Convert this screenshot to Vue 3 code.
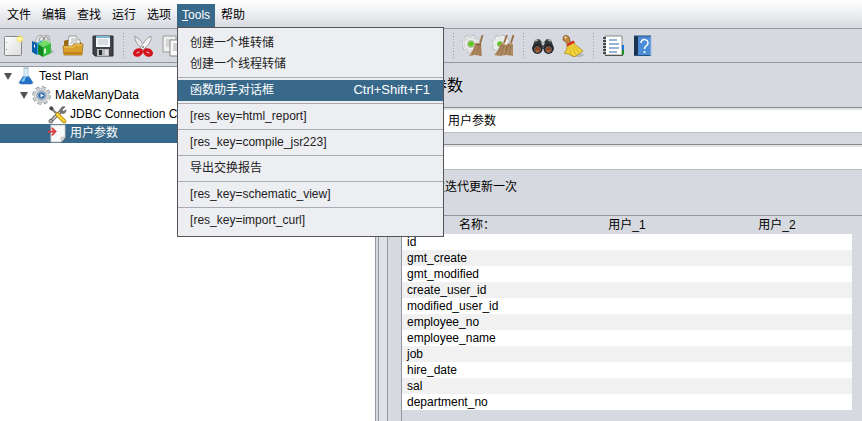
<script setup>
import { ref } from 'vue'

const menus = ['文件', '编辑', '查找', '运行', '选项', 'Tools', '帮助']

const popupGroups = [
  [{ label: '创建一个堆转储' }, { label: '创建一个线程转储' }],
  [{ label: '函数助手对话框', shortcut: 'Ctrl+Shift+F1', active: true }],
  [{ label: '[res_key=html_report]' }],
  [{ label: '[res_key=compile_jsr223]' }],
  [{ label: '导出交换报告' }],
  [{ label: '[res_key=schematic_view]' }],
  [{ label: '[res_key=import_curl]' }]
]

const columns = ['名称：', '用户_1', '用户_2']
const rows = [
  'id', 'gmt_create', 'gmt_modified', 'create_user_id', 'modified_user_id',
  'employee_no', 'employee_name', 'job', 'hire_date', 'sal', 'department_no'
]

const name = ref('用户参数')
const comment = ref('')
const once = ref(false)
</script>

<template>
  <div class="app">
    <nav class="menubar">
      <div v-for="m in menus" :key="m" class="menu">
        <button type="button" class="menu-button" :class="{ open: m === 'Tools' }">
          <template v-if="m === 'Tools'"><u>T</u>ools</template>
          <template v-else>{{ m }}</template>
        </button>
        <div v-if="m === 'Tools'" class="popup">
          <div v-for="(group, i) in popupGroups" :key="i" class="group">
            <button v-for="item in group" :key="item.label" type="button" class="item" :class="{ active: item.active }">
              <span>{{ item.label }}</span>
              <span v-if="item.shortcut" class="shortcut">{{ item.shortcut }}</span>
            </button>
          </div>
        </div>
      </div>
    </nav>

    <div class="toolbar">
      <button type="button" class="tool first" aria-label="新建">
        <svg viewBox="0 0 22 22">
          <defs>
            <linearGradient id="paper" x1="0" y1="0" x2="1" y2="1"><stop offset="0" stop-color="#fff" /><stop offset="1" stop-color="#dcdcdc" /></linearGradient>
            <radialGradient id="glow"><stop offset="0" stop-color="#fff" /><stop offset=".4" stop-color="#fff27a" /><stop offset="1" stop-color="#f5e04a" stop-opacity=".1" /></radialGradient>
          </defs>
          <rect x="2.500" y="1.500" width="17" height="19" rx="1" fill="url(#paper)" stroke="#85858a" />
          <path d="M4.500 7v1M4.500 14v1" stroke="#999" />
          <circle cx="18" cy="4" r="4" fill="url(#glow)" />
        </svg>
      </button>
      <button type="button" class="tool" aria-label="模板">
        <svg viewBox="0 0 22 22">
          <path d="M3 6l3-5 5-1 6 1 1 6-6 5z" fill="#e8e8e8" stroke="#999" stroke-width=".8" />
          <path d="M7 6c0-5 5-6 6-1M11 6c0-6 6-5 5 0" fill="none" stroke="#888" />
          <path d="M0 6l5 2v12l-5-3z" fill="#0a5fa8" /><path d="M5 8l5-3v13l-5 2z" fill="#3ba7e5" />
          <path d="M16 20l6-3-4-4z" fill="#777" opacity=".4" />
          <path d="M6 9l5 3v10l-5-3z" fill="#138423" /><path d="M11 12l8-4v10l-8 4z" fill="#2fbc39" />
          <path d="M6 9l7-4 6 3-8 4z" fill="#74da63" /><path d="M12 14l2-1v5l-2 1z" fill="#dbf8cf" />
          <path d="M2 9l1 1v3l-1-1z" fill="#fff" />
        </svg>
      </button>
      <button type="button" class="tool" aria-label="打开">
        <svg viewBox="0 0 22 22">
          <path d="M2 10V6l2-1h5l2 2h8l1 3v9H2z" fill="#9b6815" />
          <path d="M6 11l1-10h7l4 4v8z" fill="#fafafa" stroke="#888" stroke-width=".8" /><path d="M14 1v4h4" fill="#ddd" stroke="#999" stroke-width=".6" />
          <path d="M9 4h4M9 6h6M8 8h8" stroke="#aaa" />
          <path d="M1 11h9l2-2h9l-1 11H2z" fill="#d9a02d" stroke="#a87314" stroke-width=".8" />
          <path d="M2 12h9l2-2h7" fill="none" stroke="#f6d475" /><path d="M3 18h17" stroke="#c08420" stroke-width="2" />
        </svg>
      </button>
      <button type="button" class="tool" aria-label="保存">
        <svg viewBox="0 0 22 22">
          <path d="M1 1h20v20H3l-2-2z" fill="#404248" stroke="#282a2e" />
          <path d="M4 1h14v11H4z" fill="#f5f8fa" /><path d="M4 1h14v2H4z" fill="#7fb9d1" />
          <path d="M6 5h10M6 7h10M6 9h10" stroke="#b9c3c8" />
          <path d="M5 14h12v7H5z" fill="#b8babd" /><path d="M7 15h3v5H7z" fill="#25272a" /><path d="M13 15h3v5h-3z" fill="#ddd" />
        </svg>
      </button>
      <i class="divider"></i>
      <button type="button" class="tool" aria-label="剪切">
        <svg viewBox="0 0 22 22">
          <path d="M3 1c-1 5 3 9 8 14l3-2C11 8 8 4 3 1z" fill="#e6e6e6" stroke="#8a8a8a" stroke-width=".8" />
          <path d="M19 1c1 5-3 9-8 14l-3-2C11 8 14 4 19 1z" fill="#f6f6f6" stroke="#8a8a8a" stroke-width=".8" />
          <circle cx="11" cy="12" r="1" fill="#777" />
          <ellipse cx="6" cy="17.500" rx="3.500" ry="2.300" transform="rotate(-25 6 17.500)" fill="none" stroke="#d5121c" stroke-width="3.400" />
          <ellipse cx="16" cy="17.500" rx="3.500" ry="2.300" transform="rotate(25 16 17.500)" fill="none" stroke="#d5121c" stroke-width="3.400" />
        </svg>
      </button>
      <button type="button" class="tool" aria-label="复制">
        <svg viewBox="0 0 22 22">
          <path d="M1 1h13v16H1z" fill="#f0f0f0" stroke="#999" /><path d="M4 5h7M4 7h7M4 9h7M4 11h7" stroke="#bbb" />
          <path d="M8 5h13v16H8z" fill="#fafafa" stroke="#888" /><path d="M11 9h7M11 11h7M11 13h7M11 15h7" stroke="#aaa" />
        </svg>
      </button>
      <span class="covered"></span>
      <i class="divider"></i>
      <button type="button" class="tool" aria-label="清除">
        <svg viewBox="0 0 22 22">
          <circle cx="9" cy="9" r="7.500" fill="none" stroke="#a9aba9" stroke-width="3.600" stroke-dasharray="3.500 2.390" />
          <circle cx="9" cy="9" r="7.300" fill="none" stroke="#f1f1f1" stroke-width="2.600" stroke-dasharray="3.300 2.434" />
          <circle cx="9" cy="9" r="6.700" fill="#ebebeb" stroke="#bbb" stroke-width=".5" /><circle cx="9" cy="9" r="3.600" fill="#d4ebbf" stroke="#999" stroke-width=".6" /><circle cx="9" cy="9" r="2.800" fill="#5fc424" />
          <path d="M20.500 0l-2.500 9" stroke="#986d43" stroke-width="1.800" />
          <path d="M13 8l6 1 1 12-7-1-6 1c3-4 5-8 6-13z" fill="#b08b62" /><path d="M15 10l-5 10M17 10l-3 10M18 10v11" stroke="#8a6643" stroke-width=".8" /><path d="M14 9l5 1" stroke="#7c4d29" />
        </svg>
      </button>
      <button type="button" class="tool" aria-label="清除全部">
        <svg viewBox="0 0 22 22">
          <circle cx="9" cy="9" r="7.500" fill="none" stroke="#a9aba9" stroke-width="3.600" stroke-dasharray="3.500 2.390" />
          <circle cx="9" cy="9" r="7.300" fill="none" stroke="#f1f1f1" stroke-width="2.600" stroke-dasharray="3.300 2.434" />
          <circle cx="9" cy="9" r="6.700" fill="#ebebeb" /><circle cx="8" cy="9" r="2.800" fill="#5fc424" />
          <path d="M15 0l-3 8M21.500 0l-2.500 8" stroke="#986d43" stroke-width="1.800" />
          <path d="M8 9l3-1 3 2 3-2 4 1v12l-7-1-6 1-6-1c3-3 5-6 6-11z" fill="#b08b62" /><path d="M10 10L5 20M12 10l-3 10M17 9l-4 11M19 10l-2 10M14 11v5" stroke="#8a6643" stroke-width=".8" />
        </svg>
      </button>
      <i class="divider"></i>
      <button type="button" class="tool" aria-label="查找">
        <svg viewBox="0 0 22 22">
          <path d="M3 5l4-1 3 3v8l-9 1-1-3zM19 5l-4-1-3 3v8l9 1 1-3z" fill="#34373a" />
          <path d="M3 6l3-1M16 5l3 1M9 8h4" stroke="#a5a8ab" stroke-width="1.500" /><path d="M9 10h4v4H9z" fill="#555" />
          <circle cx="5.500" cy="14" r="5" fill="#222527" /><circle cx="16.500" cy="14" r="5" fill="#222527" />
          <circle cx="5.500" cy="14.500" r="3" fill="#8a421d" stroke="#666" /><circle cx="16.500" cy="14.500" r="3" fill="#8a421d" stroke="#666" />
          <path d="M4 15.500c1 1 2 1 3 0M15 15.500c1 1 2 1 3 0" stroke="#e58137" fill="none" />
        </svg>
      </button>
      <button type="button" class="tool" aria-label="重置查找">
        <svg viewBox="0 0 22 22">
          <ellipse cx="15" cy="20" rx="7" ry="2" fill="#888" opacity=".4" />
          <path d="M1.500 1.500L4 0l3 2 1 4 2 2-4 3-2-4-3-2z" fill="#c28b3e" stroke="#76501c" stroke-width=".8" /><circle cx="3.500" cy="2.500" r=".9" fill="#fff" />
          <path d="M5 10l7-3c1 4 5 5 9 9l-9 6c-1-2-3-1-4-2 1-1-3-1-6-2 3-2 3-4 3-8z" fill="#f2d43c" stroke="#a8850f" stroke-width=".8" />
          <path d="M4.500 9.500l7-4 1.500 2-7.500 4z" fill="#d52e24" /><path d="M7 12l2 7M9 11l5 8M11 10l6 7" stroke="#c5a51f" stroke-width=".7" />
        </svg>
      </button>
      <i class="divider"></i>
      <button type="button" class="tool" aria-label="函数助手">
        <svg viewBox="0 0 22 22">
          <path d="M3 1h17v19H3z" fill="#fff" stroke="#888" /><path d="M20 10h2v5h-2z" fill="#1877db" /><path d="M20 15h2v4l-2 2z" fill="#188d21" /><path d="M3 20.500h18" stroke="#555" />
          <path d="M7 5h8M7 9h10M7 13h10M7 17h8" stroke="#3468aa" stroke-width="1.200" />
          <path d="M1 3h3M1 6h3M1 9h3M1 12h3M1 15h3M1 18h3" stroke="#222" stroke-width="1.400" />
        </svg>
      </button>
      <button type="button" class="tool" aria-label="帮助">
        <svg viewBox="0 0 22 22">
          <path d="M2 1h17v20H2z" fill="#4a8cd6" /><path d="M2 1h4v20H2z" fill="#1b3350" /><path d="M2 1h17M2 20.500h17" stroke="#284f7d" />
          <path d="M19 2v19" stroke="#9dbde4" />
          <path d="M9 8c0-5 7-4 7 0 0 3-3.500 2.500-3.500 6" fill="none" stroke="#fff" stroke-width="1.500" /><circle cx="12.500" cy="17" r="1.100" fill="#fff" />
        </svg>
      </button>
    </div>

    <main class="workspace">
      <section class="tree">
        <div class="node">
          <span class="arrow"></span>
          <svg class="flask" viewBox="0 0 16 18">
            <ellipse cx="8" cy="16" rx="8" ry="1.800" fill="#888" opacity=".35" />
            <path d="M6 1h4v7l4.500 7-1 2h-11l-1-2L6 8z" fill="#dceefa" stroke="#a5bccf" stroke-width=".8" />
            <path d="M5 9.500h6l4 6-1.500 1.500h-11L1 15.500z" fill="#2470c4" /><path d="M3 14l3-4h2l-2 5z" fill="#7cc2f1" /><path d="M5 1h6" stroke="#aac3d6" />
          </svg>
          <span>Test Plan</span>
        </div>
        <div class="node level-1">
          <span class="arrow"></span>
          <svg class="gear" viewBox="0 0 20 20">
            <circle cx="10" cy="10" r="8" fill="none" stroke="#8d9196" stroke-width="3.600" stroke-dasharray="3.900 2.383" />
            <circle cx="10" cy="10" r="7.900" fill="none" stroke="#d6d8da" stroke-width="2.200" stroke-dasharray="3.200 3.005" stroke-dashoffset="-.3" />
            <circle cx="10" cy="10" r="7.300" fill="#dcdee0" stroke="#a0a4a8" stroke-width=".6" /><circle cx="10" cy="10" r="4.800" fill="#c4d8ea" stroke="#7d8790" stroke-width=".9" />
            <circle cx="10" cy="10" r="3.500" fill="#3a6ea9" /><path d="M9 8l3.500 2L9 12z" fill="#eaf5ff" />
          </svg>
          <span>MakeManyData</span>
        </div>
        <div class="node level-2">
          <svg class="leaf" viewBox="0 0 20 20">
            <path d="M2 2l8 8" stroke="#888" stroke-width="2.500" /><path d="M1 4l3-3 2 3-2 2z" fill="#444" />
            <path d="M3 17L14 6" stroke="#555" stroke-width="3.500" /><path d="M3 17L14 6" stroke="#ddd" stroke-width="1.500" />
            <path d="M13 8c-1-5 2-7 5-6l-3 3 1 2 3-2c0 4-3 5-6 3z" fill="#777" stroke="#555" stroke-width=".6" />
            <path d="M10 10l7 7" stroke="#b68a0a" stroke-width="4.500" stroke-linecap="round" /><path d="M10 10l7 7" stroke="#ffd43a" stroke-width="2.800" stroke-linecap="round" />
            <circle cx="3" cy="17" r="2" fill="#aaa" stroke="#555" stroke-width=".8" />
          </svg>
          <span>JDBC Connection Configuration</span>
        </div>
        <div class="node level-2 selected">
          <svg class="leaf" viewBox="0 0 20 20">
            <path d="M3 1h15v13l-4 5H3z" fill="#f8f8f8" stroke="#b8b8b8" stroke-width=".8" /><path d="M18 14h-4v5" fill="#ddd" stroke="#aaa" stroke-width=".7" />
            <path d="M0 8h7" stroke="#d93a3d" stroke-width="2.200" /><path d="M4 4l4 4-4 4" fill="none" stroke="#d93a3d" stroke-width="1.800" />
          </svg>
          <span>用户参数</span>
        </div>
      </section>
      <div class="splitter"></div>
      <section class="editor">
        <h1>用户参数</h1>
        <div class="field"><label for="name">名称：</label><input id="name" v-model="name" type="text" /></div>
        <div class="field"><label for="comment">注释：</label><input id="comment" v-model="comment" type="text" /></div>
        <label class="check"><input v-model="once" type="checkbox" />每次迭代更新一次</label>
        <div class="params">
          <table>
            <thead><tr><th v-for="c in columns" :key="c" scope="col">{{ c }}</th></tr></thead>
            <tbody><tr v-for="r in rows" :key="r"><td>{{ r }}</td><td></td><td></td></tr></tbody>
          </table>
        </div>
      </section>
    </main>
  </div>
</template>

<style>
html, body, #app { height: 100%; }
body { overflow: hidden; background: #d6d9df; }
</style>

<style scoped>
.app {
  display: flex;
  flex-direction: column;
  min-height: 100%;
  background: #d6d9df;
  color: #000;
  font: 12px/16px "Liberation Sans", "Noto Sans CJK SC", sans-serif;
}
button, input { font: inherit; color: inherit; }
button { border: 0; background: none; padding: 0; margin: 0; }

.menubar {
  display: flex;
  gap: 1px;
  height: 24px;
  padding: 4px 2px 0;
  border-bottom: 1px solid #9297a1;
  background: linear-gradient(#fff 0, #f4f5f7 30%, #d6d9df 100%);
}
.menu { position: relative; height: 23px; }
.menu-button { display: block; height: 23px; padding: 0 5px 2px; white-space: nowrap; }
.menu-button.open { background: #39698a; color: #fff; }
.popup {
  position: absolute;
  z-index: 5;
  top: 100%;
  left: 0;
  width: 265px;
  padding: 5px 0;
  border: 1px solid #555;
  background: #edeef2;
  color: #222;
}
.group + .group::before {
  content: "";
  display: block;
  height: 1px;
  margin: 2px 0;
  background: #a9abb0;
}
.item {
  display: flex;
  align-items: center;
  justify-content: space-between;
  width: 100%;
  height: 21px;
  padding: 0 13px 1px 12px;
  white-space: nowrap;
}
.item.active { background: #39698a; color: #fff; }
.shortcut { font-size: 13px; }

.toolbar {
  display: flex;
  align-items: center;
  height: 33px;
  border-bottom: 1px solid #9297a1;
}
.tool { flex: none; display: grid; place-items: center; width: 30px; height: 30px; }
.tool.first { margin-left: -2px; }
.tool svg { width: 22px; height: 22px; }
.covered { flex: none; width: 260px; }
.divider { flex: none; width: 10px; height: 26px; background: repeating-linear-gradient(#9a9da5 0 1px, transparent 1px 3px) center / 1px 100% no-repeat; }

.workspace { flex: 1; display: flex; padding-top: 3px; }
.tree { flex: 0 0 375px; border-top: 1px solid #9297a1; background: #fff; overflow: hidden; }
.node { display: flex; align-items: center; height: 18px; padding: 0 0 1px 4px; white-space: nowrap; }
.level-1 { padding-left: 20px; }
.level-2 { padding-left: 48px; }
.selected { background: #39698a; color: #fff; }
.arrow { border: 4px solid transparent; border-top: 7px solid #555; border-bottom: 0; }
.flask { width: 16px; height: 18px; margin: 0 5px 0 6px; }
.gear { width: 19px; height: 19px; margin: 0 4px; }
.leaf { width: 19px; height: 19px; margin-right: 3px; }

.splitter { flex: none; width: 8px; margin: -3px 0 0 3px; border: solid #9297a1; border-width: 0 1px; box-shadow: -2px 0 #d6d9df, -3px 0 #9297a1; background: #dfe2e7; }

.editor { flex: 1; min-width: 0; padding: 8px 0 0 13px; }
h1 { margin: 0 0 9px -2px; font-size: 16px; font-weight: 400; line-height: 24px; }
.field { display: flex; align-items: center; margin-bottom: 11px; }
.field label { flex: none; width: 41px; }
.field input {
  flex: 1;
  min-width: 0;
  height: 26px;
  box-sizing: border-box;
  padding: 0 5px 1px;
  border: 1px solid #babcc0;
  border-top-color: #85878c;
  border-right: 0;
  border-radius: 0;
  outline: 0;
  background: #fff;
  box-shadow: inset 0 2px #e3e4e6;
}
.check { display: flex; align-items: center; gap: 6px; height: 16px; margin: -2px 0 20px; }
.check input { width: 14px; height: 14px; margin: 0; }
.params { border: solid #9297a1; border-width: 1px 0 0 1px; padding-right: 10px; min-height: 206px; box-sizing: border-box; }
table { width: 100%; border-collapse: collapse; table-layout: fixed; }
th { height: 18px; padding: 0; font-weight: 400; }
td { height: 16px; padding: 0 5px; background: #fff; }
tbody tr:nth-child(even) td { background: #f1f1f1; }
</style>
